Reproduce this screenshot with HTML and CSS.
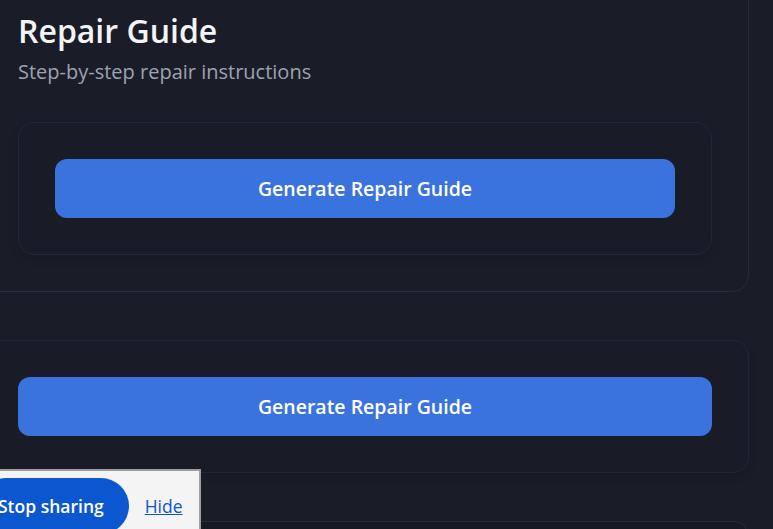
FILE: index.html
```html
<!DOCTYPE html>
<html lang="en">
<head>
<meta charset="utf-8">
<title>Repair Guide</title>
<link rel="stylesheet" href="styles.css">
</head>
<body>
<main class="page">
  <section class="card card-main">
    <h1 class="title">Repair Guide</h1>
    <p class="subtitle">Step-by-step repair instructions</p>
    <div class="panel">
      <button class="btn" type="button">Generate Repair Guide</button>
    </div>
  </section>
  <section class="panel panel-wide">
    <button class="btn" type="button">Generate Repair Guide</button>
  </section>
  <section class="card card-next"></section>
</main>
<div class="share-bar">
  <button class="share-stop" type="button">Stop sharing</button>
  <a class="share-hide" href="#">Hide</a>
</div>
</body>
</html>
```
FILE: styles.css
```css
* { box-sizing: border-box; }
html, body { margin: 0; padding: 0; }
body {
  background: #1a1d27;
  font-family: "Open Sans", "Noto Sans", sans-serif;
  width: 773px;
  height: 529px;
  overflow: hidden;
  position: relative;
}
.page {
  margin-left: -19px;
  margin-top: -26px;
  width: 768px;
  display: flex;
  flex-direction: column;
  gap: 48px;
}
.card {
  border: 1px solid #262a3b;
  border-radius: 16px;
  background: #1a1d27;
  padding: 36px;
}
.title {
  margin: 0;
  color: #f3f4f6;
  font-size: 32px;
  font-weight: 600;
  line-height: 40px;
}
.subtitle {
  margin: 8px 0 0;
  color: #9ca3af;
  font-size: 20px;
  line-height: 26px;
}
.panel {
  border: 1px solid #22263a;
  border-radius: 16px;
  background: #191c26;
  padding: 36px;
  box-shadow: 0 4px 10px rgba(0,0,0,0.12);
}
.card-main .panel { margin-top: 37px; }
.btn {
  display: block;
  width: 100%;
  height: 59px;
  border: none;
  border-radius: 12px;
  background: #3b73de;
  color: #ffffff;
  font-family: "Open Sans", "Noto Sans", sans-serif;
  font-size: 19.5px;
  font-weight: 600;
}
.card-next {
  height: 80px;
  background: #161921;
}
.share-bar {
  position: absolute;
  left: -10px;
  top: 469px;
  width: 211px;
  height: 80px;
  background: #f4f4f4;
  border: 2px solid #9e9e9e;
  display: flex;
  align-items: flex-start;
  padding-top: 7px;
  gap: 16px;
}
.share-stop {
  margin-left: -14px;
  height: 56px;
  padding: 0 25px 0 20px;
  border: none;
  border-radius: 28px;
  background: #0b57d0;
  color: #ffffff;
  font-family: "Open Sans", "Noto Sans", sans-serif;
  font-size: 17.5px;
  font-weight: 600;
  white-space: nowrap;
}
.share-hide {
  margin-top: 16px;
  color: #0b57d0;
  font-size: 17.5px;
  text-decoration: underline;
}
```
